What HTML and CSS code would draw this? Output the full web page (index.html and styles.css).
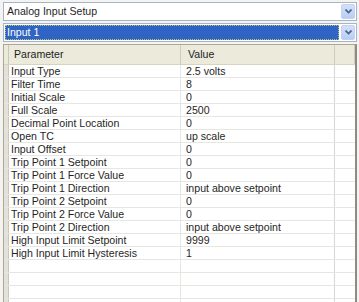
FILE: index.html
```html
<!DOCTYPE html>
<html lang="en">
<head>
  <meta charset="UTF-8" />
  <title>Analog Input Setup</title>
  <link rel="stylesheet" href="styles.css">
</head>
<body>

  <div class="combo">
    <div class="combo-text">Analog Input Setup</div>
    <div class="combo-btn">
      <svg width="7" height="5" viewBox="0 0 7 5"><path d="M0.5 0.5 L3.5 3.5 L6.5 0.5" fill="none" stroke="#4d6185" stroke-width="1.6"/></svg>
    </div>
  </div>

  <div class="combo">
    <div class="combo-text selected">Input 1</div>
    <div class="combo-btn">
      <svg width="7" height="5" viewBox="0 0 7 5"><path d="M0.5 0.5 L3.5 3.5 L6.5 0.5" fill="none" stroke="#4d6185" stroke-width="1.6"/></svg>
    </div>
  </div>

  <div class="grid">
    <div class="row head">
      <div class="lead"></div>
      <div class="cell param">Parameter</div>
      <div class="cell value">Value</div>
      <div class="cell extra"></div>
    </div>
    <div id="rows"></div>
  </div>

  <script>
    const params = [
      ['Input Type', '2.5 volts'],
      ['Filter Time', '8'],
      ['Initial Scale', '0'],
      ['Full Scale', '2500'],
      ['Decimal Point Location', '0'],
      ['Open TC', 'up scale'],
      ['Input Offset', '0'],
      ['Trip Point 1 Setpoint', '0'],
      ['Trip Point 1 Force Value', '0'],
      ['Trip Point 1 Direction', 'input above setpoint'],
      ['Trip Point 2 Setpoint', '0'],
      ['Trip Point 2 Force Value', '0'],
      ['Trip Point 2 Direction', 'input above setpoint'],
      ['High Input Limit Setpoint', '9999'],
      ['High Input Limit Hysteresis', '1'],
      ['', ''],
      ['', ''],
      ['', ''],
      ['', '']
    ];

    const rows = document.getElementById('rows');
    params.forEach(p => {
      const row = document.createElement('div');
      row.className = 'row';
      row.innerHTML = `
        <div class="lead"></div>
        <div class="cell param">${p[0]}</div>
        <div class="cell value">${p[1]}</div>
        <div class="cell extra"></div>
      `;
      rows.appendChild(row);
    });
  </script>
</body>
</html>
```

FILE: styles.css
```css
body {
  margin: 0;
  padding: 2px 2px 0 3px;
  background: #f4f3ef;
  font-family: "Liberation Sans", Arial, sans-serif;
  font-size: 10.6px;
  color: #1f1f1f;
  overflow: hidden;
}

.combo {
  display: flex;
  align-items: center;
  height: 15px;
  padding: 1px;
  margin-bottom: 2px;
  background: #fff;
  border: 1px solid #a5b5c9;
}

.combo-text {
  flex: 1;
  height: 15px;
  line-height: 15px;
  padding-left: 2px;
}

.combo-text.selected {
  margin-right: 2px;
  background: #2f64c4;
  color: #fff;
  outline: 1px dotted #b9c46e;
  outline-offset: -1px;
}

.combo-btn {
  width: 12px;
  height: 13px;
  display: flex;
  align-items: center;
  justify-content: center;
  background: linear-gradient(#d3e0fb, #b9cdf4);
  border: 1px solid #c3d2ef;
  border-radius: 2px;
}

.grid {
  margin-top: 2px;
  background: #fff;
  border: 1px solid #aca899;
  border-right: 2px solid #8e8c80;
  border-bottom: none;
  height: 259px;
  overflow: hidden;
}

.row {
  display: flex;
  height: 12px;
  border-bottom: 1px solid #e6e6e3;
}

.lead {
  width: 4px;
  background: #e3e2da;
  border-right: 1px solid #c9c7ba;
}

.cell {
  line-height: 12px;
  white-space: nowrap;
  overflow: hidden;
}

.param {
  width: 169px;
  padding-left: 2px;
  border-right: 1px solid #e6e6e3;
}

.value {
  width: 148px;
  padding-left: 5px;
  border-right: 1px solid #d6d6d3;
}

.extra {
  flex: 1;
}

.row.head {
  height: 19px;
  background: #ebeadb;
  border-bottom: 1px solid #d6d3c2;
  color: #222;
}

.row.head .cell {
  line-height: 19px;
  border-right: 1px solid #d0cdbb;
}

.row.head .param {
  padding-left: 5px;
  width: 166px;
}

.row.head .value {
  padding-left: 7px;
  width: 146px;
}

.row.head .lead {
  background: #ebeadb;
}
```
